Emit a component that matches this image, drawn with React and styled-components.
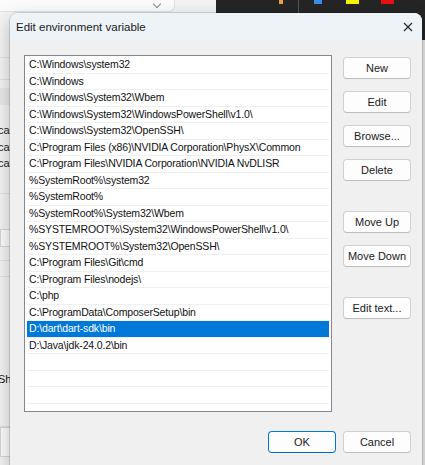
import React from "react"
import styled, { createGlobalStyle } from "styled-components"

const GlobalStyle = createGlobalStyle`
  html, body {
    margin: 0;
    padding: 0;
    overflow: hidden;
    font-family: "Liberation Sans", sans-serif;
  }
`

const paths = [
  "C:\\Windows\\system32",
  "C:\\Windows",
  "C:\\Windows\\System32\\Wbem",
  "C:\\Windows\\System32\\WindowsPowerShell\\v1.0\\",
  "C:\\Windows\\System32\\OpenSSH\\",
  "C:\\Program Files (x86)\\NVIDIA Corporation\\PhysX\\Common",
  "C:\\Program Files\\NVIDIA Corporation\\NVIDIA NvDLISR",
  "%SystemRoot%\\system32",
  "%SystemRoot%",
  "%SystemRoot%\\System32\\Wbem",
  "%SYSTEMROOT%\\System32\\WindowsPowerShell\\v1.0\\",
  "%SYSTEMROOT%\\System32\\OpenSSH\\",
  "C:\\Program Files\\Git\\cmd",
  "C:\\Program Files\\nodejs\\",
  "C:\\php",
  "C:\\ProgramData\\ComposerSetup\\bin",
  "D:\\dart\\dart-sdk\\bin",
  "D:\\Java\\jdk-24.0.2\\bin",
  "",
  "",
  "",
  "",
]

// bits of the settings window peeking out on the left, top to bottom
const sideBits = [
  { h: 46, line: true },
  { h: 22, line: true },
  { h: 8 },
  { h: 17, fill: "#e8e8e8" },
  { h: 17 },
  { h: 16.5, text: "cal" },
  { h: 16.5, text: "cal" },
  { h: 16.5, text: "cal" },
  { h: 22, line: true },
  { h: 35 },
  { h: 18, box: true },
  { h: 14, line: true },
  { h: 16, line: true },
  { h: 94 },
  { h: 16, text: "She" },
  { h: 40, line: true },
  { h: 30, box: true },
]

const Desktop = styled.div`
  position: relative;
  width: 425px;
  height: 465px;
  overflow: hidden;
  background: #f3f3f3;
  font-family: "Liberation Sans", Arial, sans-serif;
  font-size: 10.5px;
`

/* windows behind the dialog */
const SettingsWindow = styled.div`
  position: absolute;
  left: 0;
  top: 0;
  width: 216px;
  height: 465px;
  background: #f3f3f3;
  display: flex;
  flex-direction: column;
`

const SettingsCard = styled.div`
  height: 12px;
  width: 175px;
  flex: none;
  box-sizing: border-box;
  background: #fbfbfb;
  border: 1px solid #e2e2e2;
  border-top: none;
  border-left: none;
  border-bottom-right-radius: 6px;
  display: flex;
  justify-content: flex-end;
  padding: 1px 14px 0 0;
`

const Chevron = styled.span`
  width: 5px;
  height: 5px;
  border-right: 1px solid #888;
  border-bottom: 1px solid #888;
  transform: rotate(45deg);
`

const SideBit = styled.div`
  flex: none;
  width: 12px;
  height: ${({ $h }) => $h}px;
  box-sizing: border-box;
  background: ${({ $fill, $box }) => ($box ? "#fbfbfb" : $fill || "transparent")};
  border-bottom: ${({ $line }) => ($line ? "1px solid #e0e0e0" : "none")};
  border: ${({ $box }) => ($box ? "1px solid #d6d6d6" : undefined)};
  font-size: 11px;
  line-height: ${({ $h }) => $h}px;
  color: #222;
  white-space: nowrap;
  text-indent: -2px;
`

const DarkApp = styled.div`
  position: absolute;
  left: 216px;
  top: 0;
  width: 220px;
  height: 40px;
  background: #252526;
  display: flex;
  align-items: flex-start;
`

const Swatch = styled.div`
  flex: none;
  width: ${({ $w }) => $w}px;
  height: 4px;
  margin-left: ${({ $gap }) => $gap}px;
  background: ${({ $c }) => $c};
`

const DarkDivider = styled.div`
  flex: none;
  width: 1px;
  height: 14px;
  margin-left: 15px;
  background: #555;
`

const RightStrip = styled.div`
  position: absolute;
  left: 422px;
  top: 40px;
  width: 3px;
  height: 425px;
  background: #e9e9e9;
`

/* the dialog */
const Dialog = styled.div`
  position: absolute;
  left: 10px;
  top: 13px;
  width: 412px;
  height: 475px;
  background: #f0f0f0;
  border-radius: 8px;
  box-shadow: 0 0 0 1px rgba(0, 0, 0, 0.12), 0 6px 18px rgba(0, 0, 0, 0.25);
  overflow: hidden;
  display: flex;
  flex-direction: column;
`

const TitleBar = styled.div`
  height: 27px;
  flex: none;
  background: #eef3f8;
  display: flex;
  align-items: center;
  justify-content: space-between;
  padding: 0 9px 0 6px;
`

const Title = styled.span`
  font-size: 11.5px;
  color: #1a1a1a;
`

const CloseIcon = () => (
  <svg width="10" height="10" viewBox="0 0 10 10">
    <path d="M1 1 L9 9 M9 1 L1 9" stroke="#222" strokeWidth="1.1" fill="none" />
  </svg>
)

const Body = styled.div`
  display: grid;
  grid-template-columns: 308px 68px;
  column-gap: 11px;
  padding: 15px 0 0 14px;
  align-items: start;
`

const ListBox = styled.div`
  height: 357px;
  box-sizing: border-box;
  border: 1px solid #828790;
  background: #fff;
  padding: 1px 2px;
  overflow: hidden;
`

const Row = styled.div`
  height: 16.5px;
  box-sizing: border-box;
  border-bottom: 1px solid #f0f0f0;
  padding-left: 2px;
  line-height: 15.5px;
  letter-spacing: -0.15px;
  white-space: nowrap;
  color: ${({ $selected }) => ($selected ? "#fff" : "#111")};
  background: ${({ $selected }) => ($selected ? "#0078d7" : "#fff")};
`

const ButtonColumn = styled.div`
  display: flex;
  flex-direction: column;
  gap: 12px;
  padding-top: 2px;
`

const Button = styled.button`
  width: 68px;
  height: 22px;
  margin-top: ${({ $gapBefore }) => ($gapBefore ? 18 : 0)}px;
  box-sizing: border-box;
  background: #fdfdfd;
  border: 1px solid ${({ $default }) => ($default ? "#0078d7" : "#d0d0d0")};
  border-bottom-color: ${({ $default }) => ($default ? "#0067c0" : "#bdbdbd")};
  border-radius: 4px;
  font-family: inherit;
  font-size: 11px;
  color: #1a1a1a;
  padding: 0;
  white-space: nowrap;
`

const Footer = styled.div`
  display: flex;
  justify-content: flex-end;
  gap: 7px;
  padding: 19px 11px 0 0;
`

export default function App() {
  return (
    <Desktop>
      <GlobalStyle />
      <SettingsWindow>
        <SettingsCard>
          <Chevron />
        </SettingsCard>
        {sideBits.map((b, i) => (
          <SideBit key={i} $h={b.h} $line={b.line} $fill={b.fill} $box={b.box}>
            {b.text}
          </SideBit>
        ))}
      </SettingsWindow>
      <DarkApp>
        <Swatch $gap={63} $w={4} $c="#e8a33d" />
        <DarkDivider />
        <Swatch $gap={15} $w={8} $c="#3b8eea" />
        <Swatch $gap={24} $w={13} $c="#f5f500" />
        <Swatch $gap={22} $w={13} $c="#e81010" />
      </DarkApp>
      <RightStrip />

      <Dialog>
        <TitleBar>
          <Title>Edit environment variable</Title>
          <CloseIcon />
        </TitleBar>
        <Body>
          <ListBox>
            {paths.map((p, i) => (
              <Row key={i} $selected={i === 16}>
                {p}
              </Row>
            ))}
          </ListBox>
          <ButtonColumn>
            <Button>New</Button>
            <Button>Edit</Button>
            <Button>Browse...</Button>
            <Button>Delete</Button>
            <Button $gapBefore>Move Up</Button>
            <Button>Move Down</Button>
            <Button $gapBefore>Edit text...</Button>
          </ButtonColumn>
        </Body>
        <Footer>
          <Button $default>OK</Button>
          <Button>Cancel</Button>
        </Footer>
      </Dialog>
    </Desktop>
  )
}
